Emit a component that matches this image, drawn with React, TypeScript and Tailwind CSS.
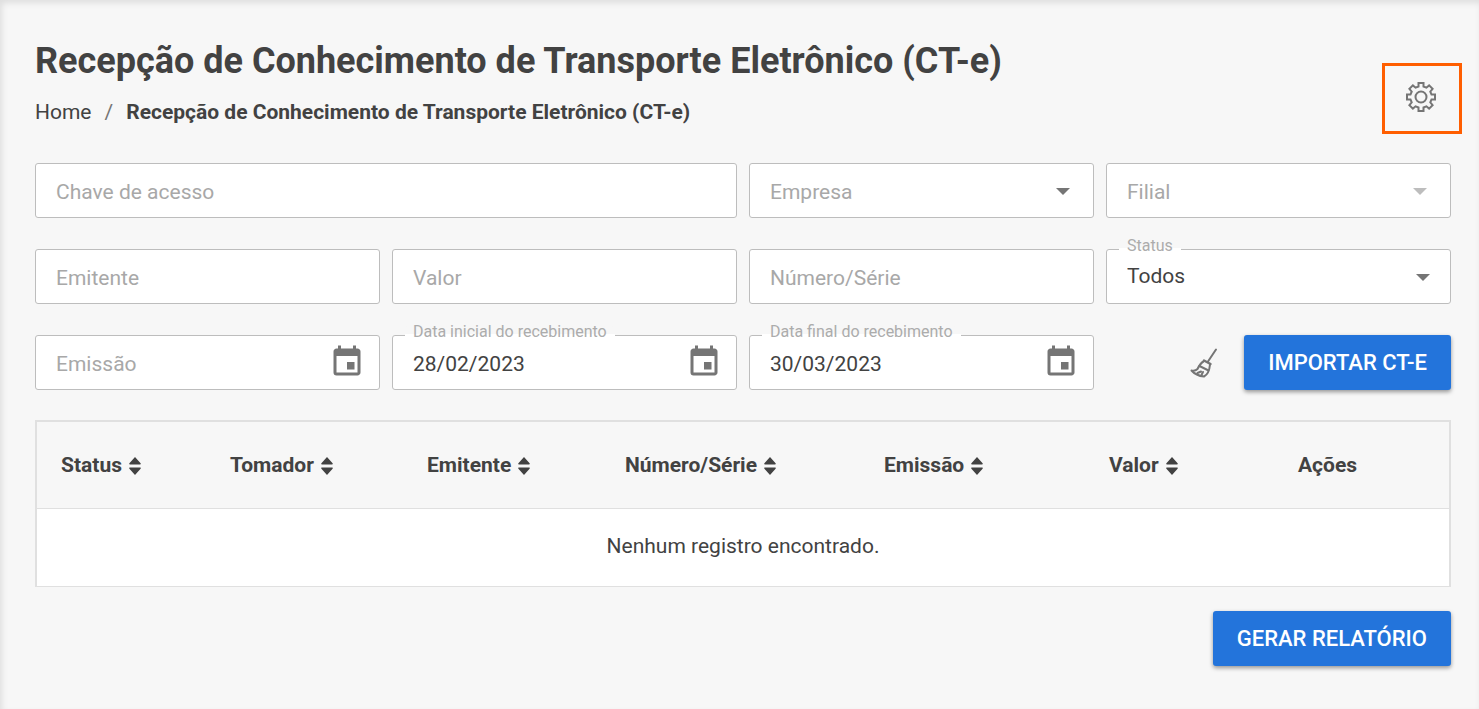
import type { ReactNode } from "react";
import { MdEvent } from "react-icons/md";

interface FieldProps {
  id: string;
  label: string;
  value?: string;
  className?: string;
  children?: ReactNode;
}

interface SelectFieldProps {
  id: string;
  label: string;
  value?: string;
  disabled?: boolean;
}

const TITLE = "Recepção de Conhecimento de Transporte Eletrônico (CT-e)";

const columns = [
  { name: "Status", width: "w-[169px]", sortable: true },
  { name: "Tomador", width: "w-[197px]", sortable: true },
  { name: "Emitente", width: "w-[198px]", sortable: true },
  { name: "Número/Série", width: "w-[259px]", sortable: true },
  { name: "Emissão", width: "w-[225px]", sortable: true },
  { name: "Valor", width: "w-[189px]", sortable: true },
  { name: "Ações", width: "w-[175px]", sortable: false },
];

const FloatingLabel = ({ id, label }: { id: string; label: string }) => (
  <label
    htmlFor={id}
    className="absolute -top-4 left-3 bg-linear-to-b from-[#f7f7f7] from-60% to-white to-60% px-2 text-base leading-6 text-[#acacac]"
  >
    {label}
  </label>
);

const TextField = ({ id, label, value, className = "", children }: FieldProps) => {
  return (
    <div
      className={`relative flex h-[55px] items-center rounded-[3px] border border-[#bdbdbd] bg-white ${className}`}
    >
      {value && <FloatingLabel id={id} label={label} />}
      <input
        id={id}
        type="text"
        aria-label={label}
        placeholder={label}
        defaultValue={value}
        className="h-full w-full min-w-0 bg-transparent px-5 pt-0.5 text-[21px] outline-none placeholder:text-[#a8a8a8]"
      />
      {children}
    </div>
  );
};

const DateField = (props: FieldProps) => (
  <TextField {...props}>
    <button
      type="button"
      aria-label={props.label}
      className="mr-3.5 mb-0.5 shrink-0 text-[#757575]"
    >
      <MdEvent size={36} />
    </button>
  </TextField>
);

const SelectField = ({ id, label, value, disabled }: SelectFieldProps) => {
  return (
    <div className="relative h-[55px] rounded-[3px] border border-[#bdbdbd] bg-white">
      {value && <FloatingLabel id={id} label={label} />}
      <select
        id={id}
        aria-label={label}
        disabled={disabled}
        className={`h-full w-full appearance-none bg-transparent px-5 text-[21px] opacity-100 outline-none ${
          value ? "text-[#424242]" : "pt-1 text-[#a8a8a8]"
        }`}
      >
        <option>{value ?? label}</option>
      </select>
      <svg
        viewBox="0 0 14 7"
        className={`pointer-events-none absolute top-6 h-[7px] w-3.5 ${
          value ? "right-5" : "right-[23px]"
        } ${disabled ? "fill-[#bdbdbd]" : "fill-[#757575]"}`}
      >
        <path d="M0 0h14L7 7z" />
      </svg>
    </div>
  );
};

const SortIcon = () => (
  <svg viewBox="0 0 12 18" className="h-[18px] w-3 fill-[#424242]">
    <path d="M6 0l5.600 6.300c.4.500.2 1.200-.5 1.200H.9c-.7 0-.9-.7-.5-1.200zM6 18l5.600-6.300c.4-.5.2-1.200-.5-1.200H.9c-.7 0-.9.7-.5 1.200z" />
  </svg>
);

const GearIcon = () => (
  <svg viewBox="0 0 30 30" className="size-[30px] fill-none stroke-[#757575] stroke-2">
    <path d="M12.500 1h5v3.500l2.900 1.200 2.700-2.300 3.500 3.500-2.300 2.700 1.200 2.900H29v5h-3.500l-1.200 2.900 2.300 2.700-3.500 3.500-2.700-2.300-2.900 1.200V29h-5v-3.500l-2.900-1.200-2.700 2.300-3.500-3.500 2.300-2.700-1.200-2.900H1v-5h3.500l1.200-2.900-2.300-2.700 3.500-3.500 2.700 2.300 2.900-1.200z" />
    <circle cx="15" cy="15" r="5.500" />
  </svg>
);

const BroomIcon = () => (
  <svg
    viewBox="0 0 28 30"
    className="h-[30px] w-7 fill-none stroke-[#757575] stroke-2"
    strokeLinecap="round"
    strokeLinejoin="round"
  >
    <path d="M26 1.500L18 13.500" />
    <path d="M14 12.500l6.500 3.500" strokeWidth="2.500" />
    <path d="M13.500 13.500c-3 1.500-4.500 4.500-6 7.500-1.500 1.500-3.500 2-6 1.500 3 3.500 7.500 5.500 12.500 6 4-2 5.500-6.500 6-12" />
    <path d="M9.500 18l9 4.500M7.500 25l3.500-1.500M11.500 27l1.500-3" />
  </svg>
);

const PrimaryButton = ({ children }: { children: ReactNode }) => (
  <button
    type="button"
    className="h-[55px] rounded-[3px] bg-[#2374db] px-6 text-[22px] font-medium whitespace-nowrap text-white shadow-[0_2px_4px_rgba(0,0,0,0.4)]"
  >
    {children}
  </button>
);

export default function App() {
  return (
    <main className="min-h-screen bg-[#f7f7f7] pt-10 pr-7 pb-11 pl-[35px] font-[Roboto,sans-serif] text-[#424242] shadow-[inset_2px_3px_6px_rgba(0,0,0,0.1)]">
      <header className="flex items-start justify-between">
        <div>
          <h1 className="text-4xl leading-[42px] font-bold">{TITLE}</h1>
          <nav className="mt-4 flex gap-[13px] text-[21px] leading-7">
            <a href="#">Home</a>
            <span className="text-[#757575]">/</span>
            <span className="font-bold">{TITLE}</span>
          </nav>
        </div>
        <button
          type="button"
          aria-label="Configurações"
          className="mt-[23px] -mr-[11px] flex h-[71px] w-20 shrink-0 items-center justify-center border-3 border-[#ff5e00] pr-0.5 pb-1"
        >
          <GearIcon />
        </button>
      </header>

      {/* Filters */}
      <form className="mt-[29px] grid grid-cols-1 gap-x-3 gap-y-[31px] md:grid-cols-4">
        <TextField id="chave" label="Chave de acesso" className="md:col-span-2" />
        <SelectField id="empresa" label="Empresa" />
        <SelectField id="filial" label="Filial" disabled />
        <TextField id="emitente" label="Emitente" />
        <TextField id="valor" label="Valor" />
        <TextField id="numero" label="Número/Série" />
        <SelectField id="status" label="Status" value="Todos" />
        <DateField id="emissao" label="Emissão" />
        <DateField id="inicial" label="Data inicial do recebimento" value="28/02/2023" />
        <DateField id="final" label="Data final do recebimento" value="30/03/2023" />
        <div className="flex items-center justify-end gap-[26px]">
          <button type="button" aria-label="Limpar">
            <BroomIcon />
          </button>
          <PrimaryButton>IMPORTAR CT-E</PrimaryButton>
        </div>
      </form>

      <div className="mt-[30px] border-2 border-b-0 border-[#e0e0e0]">
        <table className="w-full table-fixed text-[21px]">
          <thead>
            <tr className="h-[86px] border-b border-[#e0e0e0]">
              {columns.map((col) => (
                <th key={col.name} className={`pt-0.5 pl-6 text-left font-bold ${col.width}`}>
                  <span className="flex items-center gap-[7px]">
                    {col.name}
                    {col.sortable && <SortIcon />}
                  </span>
                </th>
              ))}
            </tr>
          </thead>
          <tbody>
            <tr className="h-[78px] border-b border-[#e0e0e0] bg-white">
              <td colSpan={7} className="text-center">
                Nenhum registro encontrado.
              </td>
            </tr>
          </tbody>
        </table>
      </div>

      <footer className="mt-6 flex justify-end">
        <PrimaryButton>GERAR RELATÓRIO</PrimaryButton>
      </footer>
    </main>
  );
}
